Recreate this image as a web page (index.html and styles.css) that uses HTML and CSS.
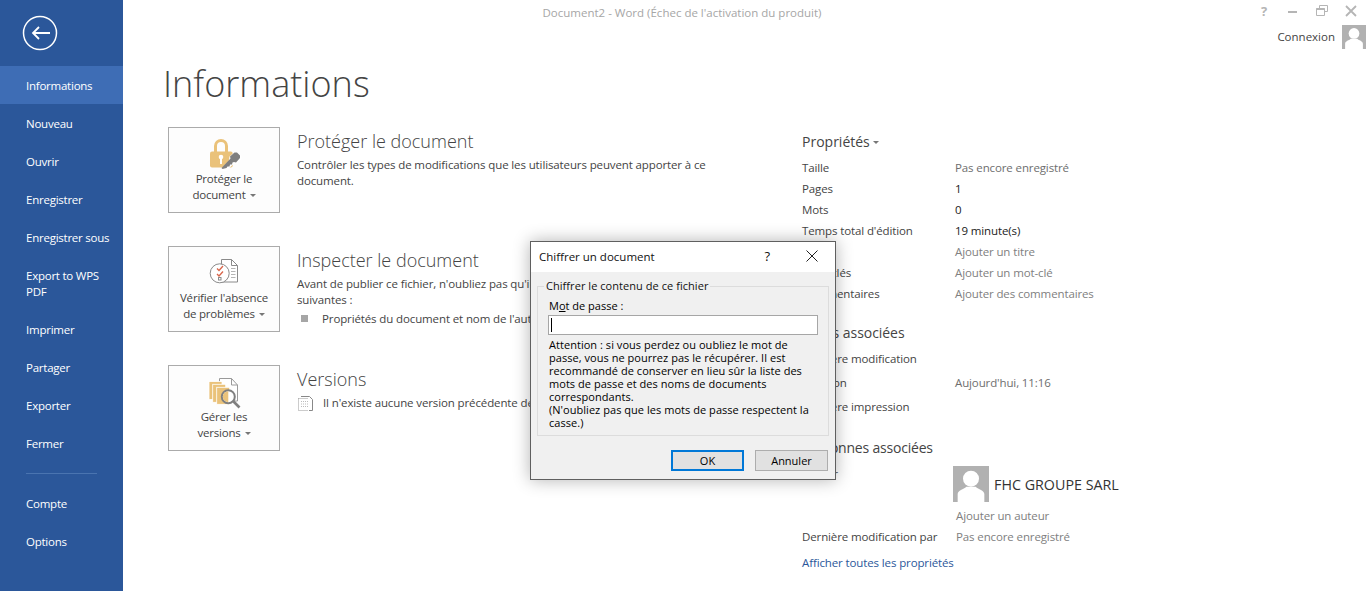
FILE: index.html
```html
<!DOCTYPE html>
<html lang="fr">
<head>
<meta charset="utf-8">
<title>Informations</title>
<link rel="stylesheet" href="styles.css">
</head>
<body>
<div class="app">
  <nav class="sidebar">
    <div class="back">
      <svg width="36" height="36" viewBox="0 0 36 36" fill="none" stroke="#fff"><circle cx="18" cy="18" r="16.5" stroke-width="1.5"/><path d="M28 18H11M17 12l-6 6 6 6" stroke-width="1.800"/></svg>
    </div>
    <a class="item active">Informations</a>
    <a class="item">Nouveau</a>
    <a class="item">Ouvrir</a>
    <a class="item">Enregistrer</a>
    <a class="item">Enregistrer sous</a>
    <a class="item tall">Export to WPS PDF</a>
    <a class="item">Imprimer</a>
    <a class="item">Partager</a>
    <a class="item">Exporter</a>
    <a class="item">Fermer</a>
    <div class="sep"></div>
    <a class="item">Compte</a>
    <a class="item">Options</a>
  </nav>

  <main class="main">
    <div class="topbar">
      <div class="doc-title">Document2 - Word (Échec de l'activation du produit)</div>
      <div class="win-controls">
        <span class="help">?</span>
        <svg width="12" height="12" viewBox="0 0 12 12"><path d="M1 7h9" stroke="#b5b5b5" stroke-width="2"/></svg>
        <svg width="12" height="12" viewBox="0 0 12 12" fill="none" stroke="#b5b5b5"><path d="M3.500 3V.5h8v6H9M.5 3.500h8v7h-8z"/><path d="M.5 4h8" stroke-width="2"/></svg>
        <svg width="12" height="12" viewBox="0 0 12 12"><path d="M1 1l10 10M11 1L1 11" stroke="#b5b5b5" stroke-width="1.800"/></svg>
      </div>
      <div class="account">
        <span>Connexion</span>
        <svg class="avatar-sm" width="24" height="24" viewBox="0 0 108 108"><rect width="108" height="108" fill="#b1b1b1"/><circle cx="54" cy="38" r="24" fill="#fff"/><path d="M14 108V84c0-12 18-14 26-22h28c8 8 26 10 26 22v24z" fill="#fff"/></svg>
      </div>
    </div>
    <h1 class="page-title">Informations</h1>
    <div class="columns">
      <div class="left">
        <section class="section">
          <button class="big-btn">
            <svg class="big-icon" width="40" height="34" viewBox="0 0 40 34">
              <path d="M11.500 15V9a5.500 5.500 0 0 1 11 0v6" fill="none" stroke="#eac27a" stroke-width="3"/>
              <rect x="6" y="14.500" width="22.700" height="16" rx="2" fill="#eac27a"/>
              <circle cx="17" cy="20" r="2.300" fill="#fff"/><rect x="16" y="20" width="2" height="7" fill="#fff"/>
              <path d="M16 33l9-9.500.5-4 5-4.500h3l4 4v3l-4.500 5-4 .5-9 8.500z" fill="#fff"/>
              <path d="M18.500 32l-1-1 9-9.500-.5-2 4.500-4h2.500l3 3v2.500l-4 4.500-2-.5-1.500.5-.5 2h-2l-.5 2h-2l-1 1.500z" fill="#7f7f7f"/>
            </svg>
            <span>Protéger le<br>document<i class="caret"></i></span>
          </button>
          <div class="sec-text">
            <h2>Protéger le document</h2>
            <p>Contrôler les types de modifications que les utilisateurs peuvent apporter à ce<br>document.</p>
          </div>
        </section>
        <section class="section">
          <button class="big-btn">
            <svg class="big-icon" width="40" height="34" viewBox="0 0 40 34" fill="none">
              <path d="M17.500 3.500h10l6 6v16.500h-16z" fill="#fff" stroke="#8a8a8a"/>
              <path d="M27.500 3.500v6h6" stroke="#8a8a8a"/>
              <path d="M27 12.500h4.500M27 15.500h4.500M27 18.500h4.500M27 21.500h4.500" stroke="#b5b5b5"/>
              <circle cx="15.700" cy="17.300" r="9.500" fill="#fff" stroke="#8a8a8a"/>
              <path d="M13 12.500l2 2 4-4.500M13 18l2 2 4-4.500" stroke="#d9654a" stroke-width="1.300"/>
              <rect x="14.500" y="21.500" width="2.500" height="2.500" stroke="#8a8a8a"/>
            </svg>
            <span>Vérifier l'absence<br>de problèmes<i class="caret"></i></span>
          </button>
          <div class="sec-text">
            <h2>Inspecter le document</h2>
            <p>Avant de publier ce fichier, n'oubliez pas qu'il contient les informations<br>suivantes :</p>
            <ul class="bullets"><li>Propriétés du document et nom de l'auteur</li></ul>
          </div>
        </section>
        <section class="section">
          <button class="big-btn">
            <svg class="big-icon" width="40" height="34" viewBox="0 0 40 34" fill="none">
              <path d="M15.500 3.500h12l6 6.500v16h-18z" fill="#fff" stroke="#9a9a9a"/>
              <path d="M27.500 3.500v6.500h6" stroke="#9a9a9a"/>
              <rect x="5" y="6.500" width="13" height="18" fill="#eac27a" stroke="#fff" stroke-width=".8"/>
              <rect x="8.700" y="9.300" width="13" height="18" fill="#eac27a" stroke="#fff" stroke-width=".8"/>
              <rect x="12.700" y="12.300" width="13" height="17" fill="#eac27a" stroke="#fff" stroke-width=".8"/>
              <circle cx="24.300" cy="21.700" r="6.500" fill="#fff" stroke="#7f7f7f" stroke-width="2"/>
              <path d="M24.300 16.200a5.500 5.500 0 0 0 0 11z" fill="#eac27a"/>
              <path d="M29.500 26.500l6 6" stroke="#7f7f7f" stroke-width="2.600"/>
            </svg>
            <span>Gérer les<br>versions<i class="caret"></i></span>
          </button>
          <div class="sec-text">
            <h2>Versions</h2>
            <div class="version-line">
              <svg width="16" height="15" viewBox="0 0 16 15" fill="none"><path d="M.5 2.500h10M.5 2.500v12h10" stroke="#999" stroke-dasharray="1 1"/><path d="M3 .5h8.500l3 3v11H11" stroke="#888"/><path d="M3 5.500h7M3 8h7M3 10.500h7" stroke="#bbb" stroke-dasharray="1 1"/></svg>
              <span>Il n'existe aucune version précédente de ce fichier.</span>
            </div>
          </div>
        </section>
      </div>

      <aside class="props">
        <h3 class="props-title">Propriétés<i class="caret"></i></h3>
        <dl class="rows">
          <div class="row"><dt>Taille</dt><dd class="muted-dark">Pas encore enregistré</dd></div>
          <div class="row"><dt>Pages</dt><dd class="ink">1</dd></div>
          <div class="row"><dt>Mots</dt><dd class="ink">0</dd></div>
          <div class="row"><dt>Temps total d'édition</dt><dd class="ink">19 minute(s)</dd></div>
          <div class="row"><dt>Titre</dt><dd class="muted">Ajouter un titre</dd></div>
          <div class="row"><dt>Mots clés</dt><dd class="muted">Ajouter un mot-clé</dd></div>
          <div class="row"><dt>Commentaires</dt><dd class="muted">Ajouter des commentaires</dd></div>
        </dl>
        <h3 class="group-title">Dates associées</h3>
        <dl class="rows tight">
          <div class="row"><dt>Dernière modification</dt><dd></dd></div>
          <div class="row"><dt>Création</dt><dd class="muted-dark">Aujourd'hui, 11:16</dd></div>
          <div class="row"><dt>Dernière impression</dt><dd></dd></div>
        </dl>
        <h3 class="group-title people">Personnes associées</h3>
        <div class="author">
          <span class="author-label">Auteur</span>
          <div class="author-value">
            <svg width="36" height="36" viewBox="0 0 108 108"><rect width="108" height="108" fill="#b1b1b1"/><circle cx="54" cy="38" r="24" fill="#fff"/><path d="M14 108V84c0-12 18-14 26-22h28c8 8 26 10 26 22v24z" fill="#fff"/></svg>
            <span>FHC GROUPE SARL</span>
          </div>
        </div>
        <div class="add-author">Ajouter un auteur</div>
        <div class="row last"><dt>Dernière modification par</dt><dd class="muted">Pas encore enregistré</dd></div>
        <a class="all-props">Afficher toutes les propriétés</a>
      </aside>
    </div>
  </main>

  <div class="dialog" role="dialog">
    <div class="dlg-title">
      <span class="dlg-name">Chiffrer un document</span>
      <span class="dlg-help">?</span>
      <svg width="12" height="12" viewBox="0 0 12 12"><path d="M.5.5l11 11M11.500.5l-11 11" stroke="#222" stroke-width="1"/></svg>
    </div>
    <div class="dlg-body">
      <fieldset class="group">
        <legend>Chiffrer le contenu de ce fichier</legend>
        <label class="pw-label">M<u>o</u>t de passe :</label>
        <div class="pw-input"><i class="cursor"></i></div>
        <p class="warn">Attention : si vous perdez ou oubliez le mot de passe, vous ne pourrez pas le récupérer. Il est recommandé de conserver en lieu sûr la liste des mots de passe et des noms de documents correspondants.<br>(N'oubliez pas que les mots de passe respectent la casse.)</p>
      </fieldset>
      <div class="dlg-buttons">
        <button class="dlg-btn primary">OK</button>
        <button class="dlg-btn">Annuler</button>
      </div>
    </div>
  </div>
</div>
</body>
</html>
```
FILE: styles.css
```css
* { box-sizing: border-box; }
html, body { margin: 0; height: 100%; overflow: hidden; }
body {
  font-family: "Open Sans", "Noto Sans", "Liberation Sans", sans-serif;
  font-size: 11.5px;
  letter-spacing: -.12px;
  color: #444;
  background: #fff;
}
.app { position: relative; display: flex; height: 591px; overflow: hidden; }

.sidebar { width: 123px; flex: none; background: #2b579a; color: #fff; }
.back { height: 66px; padding: 15px 0 0 22px; }
.back svg { display: block; }
.item { display: flex; align-items: center; height: 38px; padding: 2px 0 0 26px; font-size: 11.500px; letter-spacing: -.24px; line-height: 16px; color: #fff; }
.item.active { background: #3e6db5; }
.item.tall { height: 54px; padding-right: 14px; }
.sep { height: 1px; margin: 11px 26px 10px; background: #4a74b0; }

.main { flex: 1; min-width: 0; }
.topbar { height: 60px; position: relative; }
.doc-title {
  position: absolute; top: 4px; left: -125px; right: 0;
  text-align: center; line-height: 18px; color: #a6a6a6; letter-spacing: 0;
}
.win-controls { position: absolute; top: 5px; right: 9px; display: flex; align-items: center; gap: 17px; }
.help { width: 12px; font-weight: 700; font-size: 13px; line-height: 12px; color: #b5b5b5; text-align: center; }
.account { position: absolute; top: 24px; right: 0; display: flex; align-items: center; gap: 7px; height: 24px; letter-spacing: 0; }
.avatar-sm { display: block; margin-top: 2px; }

.page-title { margin: 0 0 0 40px; font-size: 36px; line-height: 48px; font-weight: 300; color: #444; letter-spacing: .02px; }

.columns { display: flex; padding: 19px 0 0 45px; }
.left { width: 634px; flex: none; }
.section { display: flex; gap: 17px; height: 86px; margin-bottom: 33px; }
.big-btn {
  width: 112px; height: 86px; flex: none; padding: 9px 0 0; display: flex; flex-direction: column; align-items: center;
  background: #fdfdfd; border: 1px solid #ababab;
  font: inherit; letter-spacing: -.2px; line-height: 16px; color: #444; text-align: center;
}
.big-icon { display: block; }
.caret { display: inline-block; width: 0; height: 0; margin-left: 4px; vertical-align: 2px; border: 3px solid transparent; border-top: 3px solid #777; border-bottom: 0; }
.sec-text h2 { margin: 2px 0 4px; font-size: 18px; line-height: 24px; font-weight: 300; color: #444; letter-spacing: 0; }
.sec-text p { margin: 0; line-height: 16px; white-space: nowrap; }
.bullets { list-style: none; margin: 3px 0 0; padding: 0; line-height: 16px; }
.bullets li { position: relative; padding-left: 25px; white-space: nowrap; }
.bullets li::before { content: ""; position: absolute; left: 4px; top: 4px; width: 7px; height: 7px; background: #a6a6a6; }
.version-line { display: flex; align-items: center; gap: 9px; margin: 1px 0 0 1px; line-height: 16px; white-space: nowrap; }

.props { flex: 1; min-width: 0; }
.props-title { margin: 0; padding: 3px 0 0; height: 30px; font-size: 14px; line-height: 24px; font-weight: 400; color: #444; letter-spacing: 0; }
.props-title .caret { margin-left: 3px; vertical-align: 3px; }
.rows { margin: 0; }
.row { display: flex; height: 21px; line-height: 21px; margin: 0; }
.row dt { width: 153px; flex: none; }
.row dd { margin: 0; }
.ink { color: #222; }
.muted { color: #808080; }
.muted-dark { color: #6e6e6e; }
.group-title { margin: 17px 0 2px; font-size: 14px; line-height: 24px; font-weight: 400; color: #444; letter-spacing: -.05px; }
.tight .row { height: 24px; line-height: 24px; }
.group-title.people { margin: 17px 0 6px; letter-spacing: -.2px; }
.author { display: flex; height: 36px; }
.author-label { width: 151px; flex: none; }
.author-value { display: flex; align-items: center; gap: 5px; font-size: 14.300px; color: #333; letter-spacing: 0; }
.author-value svg { display: block; }
.add-author { margin: 3px 0 0 154px; line-height: 21px; color: #808080; }
.row.last dt { width: 154px; }
.all-props { display: block; margin-top: 5px; line-height: 21px; color: #2b579a; }

.dialog {
  position: absolute; left: 530px; top: 241px; width: 306px; height: 239px;
  background: #f0f0f0; border: 1px solid #5f5f5f;
  box-shadow: 0 0 16px rgba(0,0,0,.3);
  font-size: 11px; letter-spacing: 0; color: #000; display: flex; flex-direction: column;
}
.dlg-title { height: 30px; flex: none; background: #fff; display: flex; align-items: center; padding: 0 17px 2px 8px; font-size: 11.500px; color: #111; }
.dlg-name { flex: 1; }
.dlg-help { margin-right: 36px; font-size: 13px; }
.dlg-body { flex: 1; padding: 7px 7px 0 6px; }
.group { margin: 0; padding: 0 10px 0 11px; height: 157px; border: 1px solid #dcdcdc; position: relative; }
.group legend { padding: 0 2px; margin-left: -5px; font-size: 11px; letter-spacing: .05px; line-height: 14px; color: #111; }
.pw-label { display: block; line-height: 14px; margin-top: 6px; }
.pw-input { height: 20px; width: 270px; margin: 2px 0 0 -1px; background: #fff; border: 1px solid #a6a6a6; padding: 2px 0 0 2px; }
.cursor { display: block; width: 1px; height: 14px; background: #000; }
.warn { margin: 3px 0 0; line-height: 13px; width: 268px; letter-spacing: .04px; }
.dlg-buttons { display: flex; justify-content: flex-end; gap: 11px; margin-top: 14px; }
.dlg-btn { width: 73px; height: 21px; padding: 0; background: #e1e1e1; border: 1px solid #adadad; font: inherit; color: #000; }
.dlg-btn.primary { border: 2px solid #0078d7; }
```
